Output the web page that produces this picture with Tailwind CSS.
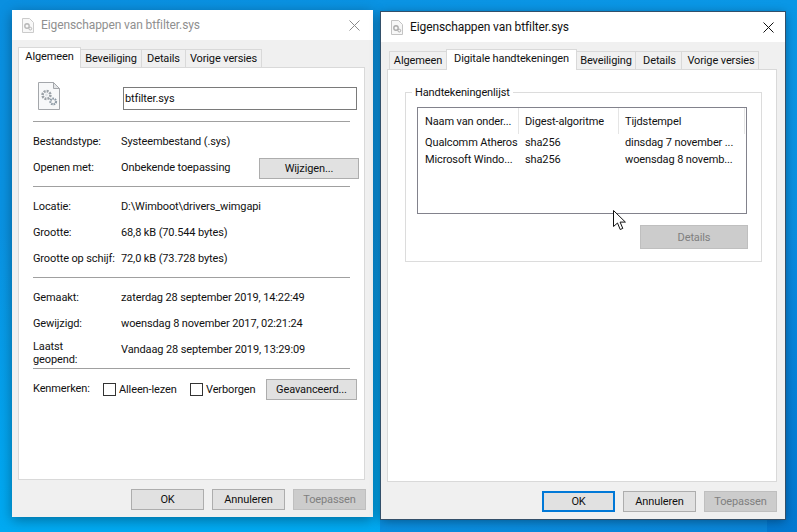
<!DOCTYPE html>
<html lang="nl"><head><meta charset="utf-8"><title>Eigenschappen</title>
<script src="https://cdn.jsdelivr.net/npm/@tailwindcss/browser@4"></script></head>
<body class="m-0 overflow-hidden">
<div class="relative w-[797px] h-[532px] overflow-hidden bg-gradient-to-br from-[#0a8fe0] via-[#0a97e6] to-[#0a84d8] font-['Roboto',sans-serif] text-[11px] tracking-[-0.12px] leading-[16px] text-[#111] whitespace-nowrap">
  <div class="absolute left-0 bottom-0 w-[380px] h-[300px] bg-gradient-to-b from-transparent to-[#00aaf2]"></div>
  <div class="absolute right-0 top-[240px] w-[30px] h-[292px] bg-gradient-to-b from-[#0a8ae0] to-[#0378d0]"></div>

  <!-- Left window -->
  <section class="absolute left-[12px] top-[10px] w-[361px] h-[507px] flex flex-col bg-[#f0f0f0] shadow-[0_3px_12px_rgba(0,0,0,0.35)]">
    <header class="h-[30px] shrink-0 bg-white flex items-center pl-[10px] pr-[10px] text-[#8f8f8f]">
      <svg class="w-[12px] h-[15px] mr-[7px] opacity-60 shrink-0" viewBox="0 0 12 15"><path d="M.5.5h7l4 4v10H.5z" fill="#f4f4f4" stroke="#aaa"/><circle cx="5" cy="8" r="2.2" fill="none" stroke="#888" stroke-width="1.4"/><circle cx="8.3" cy="10.6" r="1.4" fill="none" stroke="#888"/></svg>
      <span class="text-[12px] tracking-[-0.1px]">Eigenschappen van btfilter.sys</span>
      <svg class="ml-auto mr-[3px] w-[11px] h-[11px]" viewBox="0 0 11 11"><path d="M.5.5l10 10M10.5.5l-10 10" stroke="#8a8a8a" fill="none"/></svg>
    </header>
    <div class="flex pl-[6px] pt-[7px] h-[27px] shrink-0 items-end relative z-10">
      <div class="w-[63px] h-[21px] -mb-px text-center pt-[1px] bg-white border border-b-0 border-[#d9d9d9]">Algemeen</div>
      <div class="w-[61px] text-center h-[18px] pt-[1px] bg-[#f0f0f0] border border-b-0 border-l-0 border-[#d9d9d9]">Beveiliging</div>
      <div class="w-[44px] text-center h-[18px] pt-[1px] bg-[#f0f0f0] border border-b-0 border-l-0 border-[#d9d9d9]">Details</div>
      <div class="w-[76px] text-center h-[18px] pt-[1px] bg-[#f0f0f0] border border-b-0 border-l-0 border-[#d9d9d9]">Vorige versies</div>
    </div>
    <div class="ml-[6px] w-[347px] h-[413px] bg-white border border-[#d9d9d9] pl-[14px] pr-[14px] flex flex-col">
      <div class="h-[54px] shrink-0 flex items-start pl-[5px] pt-[14px] border-b border-[#a0a0a0]">
        <svg class="w-[22px] h-[28px] shrink-0" viewBox="0 0 22 28"><path d="M.5.5h15l6 6v21H.5z" fill="#f7f8f9" stroke="#a4a7ab"/><path d="M15.5.5v6h6z" fill="#e3e5e7" stroke="#a4a7ab"/><circle cx="8.5" cy="13" r="3.9" fill="none" stroke="#9aa0a6" stroke-width="2.6" stroke-dasharray="2 1"/><circle cx="8.5" cy="13" r="1.4" fill="#dfe3e6"/><circle cx="15.2" cy="19.5" r="2.8" fill="none" stroke="#8b98a3" stroke-width="2.2" stroke-dasharray="1.6 .8"/></svg>
        <div class="ml-[63px] mt-[5px] shrink-0 w-[234px] h-[23px] border border-[#7a7a7a] pl-[1px] flex items-center">btfilter.sys</div>
      </div>
      <div class="h-[26px] mt-[6px] pt-[2px] flex items-center"><span class="w-[88px] shrink-0">Bestandstype:</span><span>Systeembestand (.sys)</span></div>
      <div class="h-[26px] pt-[2px] flex items-center"><span class="w-[88px] shrink-0">Openen met:</span><span>Onbekende toepassing</span><button class="ml-auto -mr-[9px] mt-[1px] w-[100px] h-[21px] bg-[#e1e1e1] border border-[#adadad]">Wijzigen...</button></div>
      <div class="border-b border-[#a0a0a0] mt-[6px]"></div>
      <div class="h-[26px] mt-[6px] pt-[2px] flex items-center"><span class="w-[88px] shrink-0">Locatie:</span><span>D:\Wimboot\drivers_wimgapi</span></div>
      <div class="h-[26px] pt-[2px] flex items-center"><span class="w-[88px] shrink-0">Grootte:</span><span>68,8 kB (70.544 bytes)</span></div>
      <div class="h-[26px] pt-[2px] flex items-center"><span class="w-[88px] shrink-0">Grootte op schijf:</span><span>72,0 kB (73.728 bytes)</span></div>
      <div class="border-b border-[#a0a0a0] mt-[6px]"></div>
      <div class="h-[26px] mt-[6px] pt-[2px] flex items-center"><span class="w-[88px] shrink-0">Gemaakt:</span><span>zaterdag 28 september 2019, 14:22:49</span></div>
      <div class="h-[26px] pt-[2px] flex items-center"><span class="w-[88px] shrink-0">Gewijzigd:</span><span>woensdag 8 november 2017, 02:21:24</span></div>
      <div class="h-[30px] flex items-start"><span class="w-[88px] shrink-0 leading-[13px] pt-[4px]">Laatst<br>geopend:</span><span class="pt-[6px]">Vandaag 28 september 2019, 13:29:09</span></div>
      <div class="border-b border-[#a0a0a0] mt-[2px]"></div>
      <div class="mt-[10px] h-[21px] flex items-center">
        <span class="w-[70px] shrink-0 -mt-[2px]">Kenmerken:</span>
        <span class="w-[13px] h-[13px] shrink-0 border border-[#333] -mt-[1px]"></span><span class="ml-[3px] w-[71px] shrink-0">Alleen-lezen</span>
        <span class="w-[13px] h-[13px] shrink-0 border border-[#333] -mt-[1px]"></span><span class="ml-[3px]">Verborgen</span>
        <button class="ml-auto -mr-[7px] w-[91px] shrink-0 h-[21px] bg-[#e1e1e1] border border-[#adadad]">Geavanceerd...</button>
      </div>
    </div>
    <footer class="mt-[9px] flex justify-end gap-[8px] pr-[7px]">
      <button class="w-[73px] h-[21px] bg-[#e1e1e1] border border-[#adadad]">OK</button>
      <button class="w-[73px] h-[21px] bg-[#e1e1e1] border border-[#adadad]">Annuleren</button>
      <button class="w-[73px] h-[21px] bg-[#cccccc] border border-[#bfbfbf] text-[#7f7f7f]">Toepassen</button>
    </footer>
  </section>

  <!-- Right window -->
  <section class="absolute left-[381px] top-[12px] w-[404px] h-[507px] flex flex-col bg-[#f0f0f0] shadow-[0_2px_10px_rgba(0,0,0,0.4)] outline outline-1 outline-[#33506a]">
    <header class="h-[30px] shrink-0 bg-white flex items-center pl-[10px] pr-[10px] text-[#111]">
      <svg class="w-[12px] h-[15px] mr-[7px] opacity-70 shrink-0" viewBox="0 0 12 15"><path d="M.5.5h7l4 4v10H.5z" fill="#f4f4f4" stroke="#aaa"/><circle cx="5" cy="8" r="2.2" fill="none" stroke="#888" stroke-width="1.4"/><circle cx="8.3" cy="10.6" r="1.4" fill="none" stroke="#888"/></svg>
      <span class="text-[12px] tracking-[-0.1px]">Eigenschappen van btfilter.sys</span>
      <svg class="ml-auto mr-[1px] w-[11px] h-[11px]" viewBox="0 0 11 11"><path d="M.5.5l10 10M10.5.5l-10 10" stroke="#111" fill="none"/></svg>
    </header>
    <div class="flex pl-[8px] pt-[7px] h-[27px] shrink-0 items-end relative z-10">
      <div class="w-[57px] text-center h-[18px] pt-[1px] bg-[#f0f0f0] border border-b-0 border-r-0 border-[#d9d9d9]">Algemeen</div>
      <div class="w-[131px] text-center h-[21px] -mb-px pt-[1px] bg-white border border-b-0 border-[#d9d9d9]">Digitale handtekeningen</div>
      <div class="w-[59px] text-center h-[18px] pt-[1px] bg-[#f0f0f0] border border-b-0 border-l-0 border-[#d9d9d9]">Beveiliging</div>
      <div class="w-[46px] text-center h-[18px] pt-[1px] pl-[2px] bg-[#f0f0f0] border border-b-0 border-l-0 border-[#d9d9d9]">Details</div>
      <div class="w-[77px] text-center h-[18px] pt-[1px] pl-[2px] bg-[#f0f0f0] border border-b-0 border-l-0 border-[#d9d9d9]">Vorige versies</div>
    </div>
    <div class="ml-[6px] w-[390px] h-[413px] bg-white border border-[#d9d9d9] pl-[17px] pr-[14px] pt-[22px]">
      <div class="relative h-[170px] border border-[#dcdcdc] pl-[11px] pr-[14px] pt-[14px]">
        <span class="absolute -top-[8px] left-[6px] bg-white px-[3px]">Handtekeningenlijst</span>
        <div class="h-[107px] border border-[#82828c]">
          <div class="grid grid-cols-[101px_100px_126px_1fr] h-[26px] items-center">
            <span class="pl-[7px] pt-[2px] border-r border-[#e5e5e5] h-full flex items-center">Naam van onder...</span>
            <span class="pl-[6px] pt-[2px] border-r border-[#e5e5e5] h-full flex items-center">Digest-algoritme</span>
            <span class="pl-[6px] pt-[2px] border-r border-[#e5e5e5] h-full flex items-center">Tijdstempel</span>
            <span></span>
          </div>
          <div class="grid grid-cols-[101px_100px_1fr] h-[17px] items-center"><span class="pl-[7px]">Qualcomm Atheros</span><span class="pl-[6px]">sha256</span><span class="pl-[6px]">dinsdag 7 november ...</span></div>
          <div class="grid grid-cols-[101px_100px_1fr] h-[17px] items-center"><span class="pl-[7px]">Microsoft Windo...</span><span class="pl-[6px]">sha256</span><span class="pl-[6px]">woensdag 8 novemb...</span></div>
        </div>
        <div class="mt-[11px] flex justify-end"><button class="-mr-[1px] w-[108px] h-[24px] pt-[2px] bg-[#cccccc] border border-[#bfbfbf] text-[#7f7f7f]">Details</button></div>
      </div>
    </div>
    <footer class="mt-[9px] flex justify-end gap-[8px] pr-[8px]">
      <button class="w-[73px] h-[21px] bg-[#e1e1e1] border-2 border-[#0078d7]">OK</button>
      <button class="w-[73px] h-[21px] bg-[#e1e1e1] border border-[#adadad]">Annuleren</button>
      <button class="w-[73px] h-[21px] bg-[#cccccc] border border-[#bfbfbf] text-[#7f7f7f]">Toepassen</button>
    </footer>
  </section>

  <!-- Mouse cursor -->
  <svg class="absolute left-[613px] top-[210px] w-[13px] h-[21px]" viewBox="0 0 13 21"><path d="M.5.5v16l4-3.5 2.7 6.5 2.6-1.1-2.7-6.3h5.3z" fill="#fff" stroke="#111"/></svg>
</div>
</body></html>
